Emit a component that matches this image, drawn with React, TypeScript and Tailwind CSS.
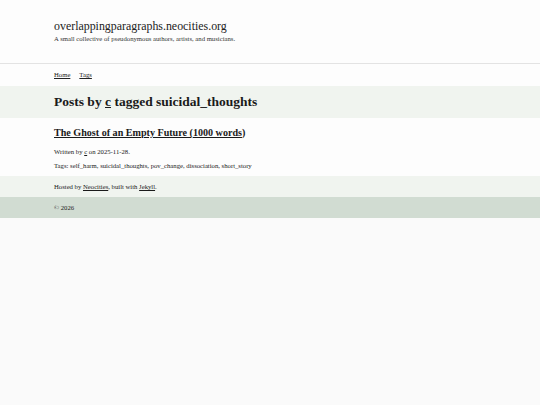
import React from "react";

const serif = { fontFamily: '"Liberation Serif", "Times New Roman", serif' };

function Wrap({ children }: { children: React.ReactNode }) {
  return <div className="px-[54px]">{children}</div>;
}

export default function App() {
  return (
    <div className="min-h-[405px] bg-[#fafafa] text-[#1a1a1a]" style={serif}>
      <header className="bg-[#fdfdfd] border-b border-[#e3e3e3]">
        <Wrap>
          <div className="pt-[18px] pb-[20px]">
            <div className="text-[11.9px] leading-[16px] text-[#222]">overlappingparagraphs.neocities.org</div>
            <div className="text-[6.7px] leading-[9px] text-[#333]">
              A small collective of pseudonymous authors, artists, and musicians.
            </div>
          </div>
        </Wrap>
      </header>

      <nav className="bg-[#fdfdfd]">
        <Wrap>
          <div className="flex gap-[9px] text-[6.7px] leading-[22px]">
            <a className="underline text-[#222]">Home</a>
            <a className="underline text-[#222]">Tags</a>
          </div>
        </Wrap>
      </nav>

      <section className="bg-[#f0f4ef]">
        <Wrap>
          <h1 className="text-[13.5px] font-bold leading-[32px]">
            Posts by <a className="underline">c</a> tagged suicidal_thoughts
          </h1>
        </Wrap>
      </section>

      <main className="bg-[#fdfdfd]">
        <Wrap>
          <div className="pt-[8px] pb-[6px]">
            <h2 className="text-[10.1px] font-bold leading-[14px]">
              <a className="underline">The Ghost of an Empty Future (1000 words</a>)
            </h2>
            <p className="text-[6.7px] leading-[9px] mt-[7px]">
              Written by <a className="underline">c</a> on 2025-11-28.
            </p>
            <p className="text-[6.7px] leading-[9px] mt-[5px]">
              Tags: self_harm, suicidal_thoughts, pov_change, dissociation, short_story
            </p>
          </div>
        </Wrap>
      </main>

      <footer>
        <div className="bg-[#f0f4ef]">
          <Wrap>
            <p className="text-[6.7px] leading-[21px]">
              Hosted by <a className="underline">Neocities</a>, built with <a className="underline">Jekyll</a>.
            </p>
          </Wrap>
        </div>
        <div className="bg-[#d1dcd2]">
          <Wrap>
            <p className="text-[6.7px] leading-[21px]">© 2026</p>
          </Wrap>
        </div>
      </footer>
    </div>
  );
}
